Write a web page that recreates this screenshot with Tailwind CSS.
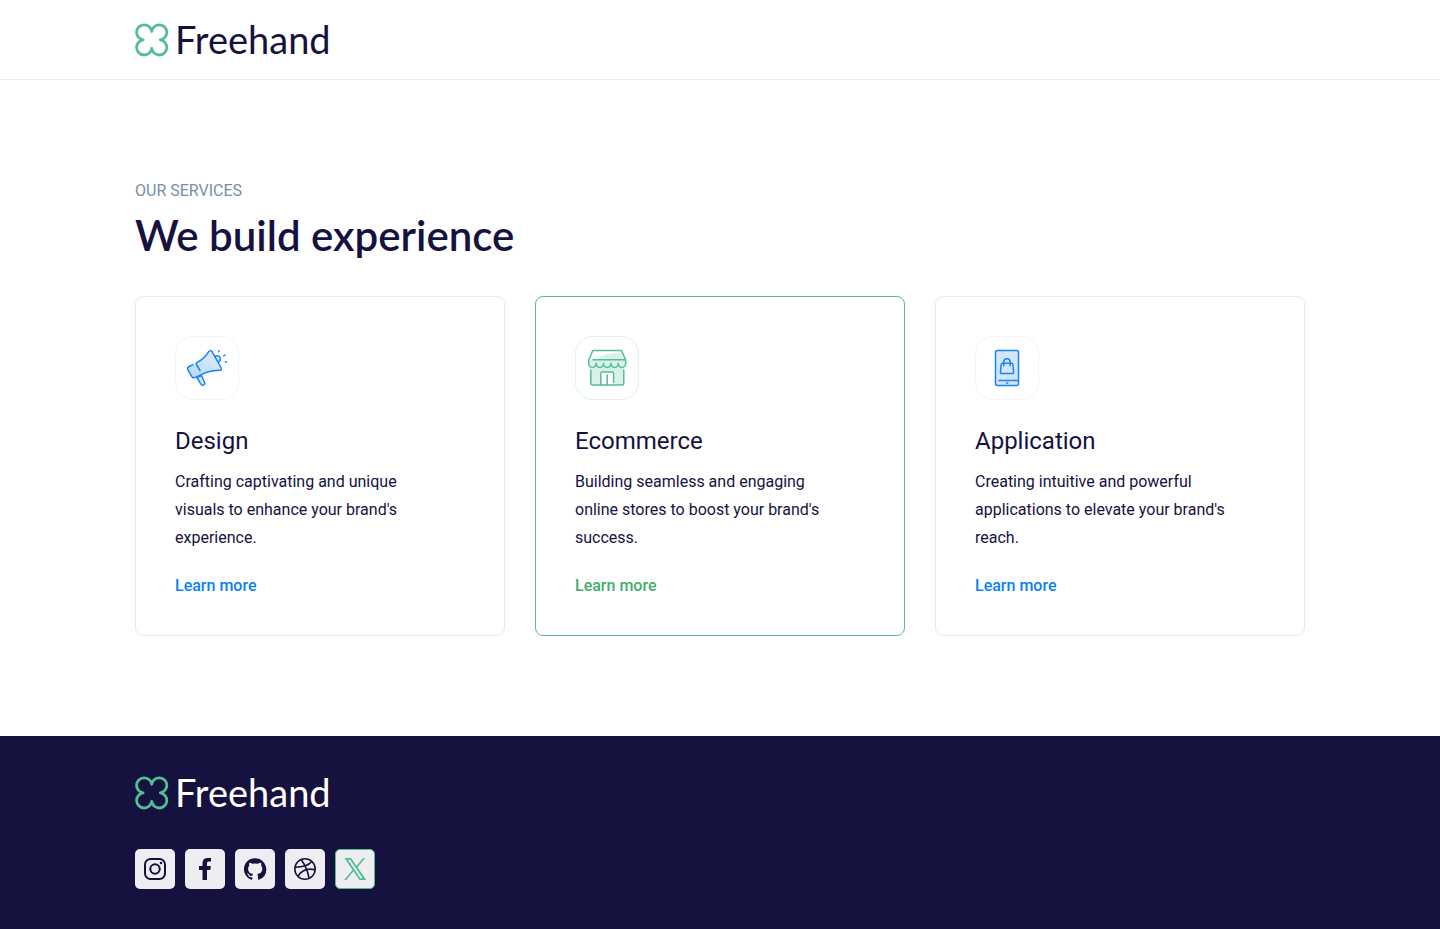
<!DOCTYPE html>
<html lang="en">
<head>
<meta charset="utf-8">
<meta name="viewport" content="width=device-width, initial-scale=1">
<title>Freehand</title>
<script src="https://cdn.jsdelivr.net/npm/@tailwindcss/browser@4"></script>
</head>
<body class="flex min-h-screen flex-col bg-white font-['Roboto',sans-serif] text-base text-[#16123f]">
<svg class="hidden" aria-hidden="true">
  <symbol id="clover" viewBox="0 0 34 34">
    <path d="M16.700 8.300A7.600 7.600 0 1 1 25.300 16.900A7.600 7.600 0 1 1 16.700 25.500A7.600 7.600 0 1 1 8.100 16.900A7.600 7.600 0 1 1 16.700 8.300Z" fill="none" stroke="#54bd95" stroke-width="2.800" stroke-linejoin="round"/>
  </symbol>
</svg>

<header class="border-b border-[#ececf1]">
  <div class="mx-auto flex h-[79px] w-full max-w-[1170px] items-center">
    <a href="#" class="flex items-center gap-1.5">
      <svg class="size-[34px]" aria-hidden="true"><use href="#clover"/></svg>
      <span class="pb-0.5 font-['Lato',sans-serif] text-[38px] leading-9">Freehand</span>
    </a>
  </div>
</header>

<main class="mx-auto w-full max-w-[1170px] grow pt-[100px] pb-24">
  <p class="leading-[22px] text-[#7390a8]">OUR SERVICES</p>
  <h1 class="mt-2 font-['Lato',sans-serif] text-[42px] leading-[50px] font-semibold">We build experience</h1>
  <div class="mt-9 grid gap-[30px] md:grid-cols-3">

    <article class="rounded-lg border border-[#e9e9f3] px-[39px] pt-[39px] pb-[35px]">
      <svg class="size-16" viewBox="0 0 64 64" fill="none" stroke="#1785f5" stroke-width="1.500" stroke-linecap="round" stroke-linejoin="round" aria-hidden="true">
        <defs><linearGradient id="horn" x1="0" y1="1" x2="1" y2="0"><stop offset="0" stop-color="#b9d8fb"/><stop offset="1" stop-color="#dfedfe"/></linearGradient></defs>
        <rect x=".5" y=".5" width="63" height="63" rx="17" fill="#fff" stroke="#edf4fd" stroke-width="1"/>
        <path d="M22 41.500L26 48.300Q27 49.800 28.600 48.800Q30.300 47.800 29.500 46.300L26.500 39.500Z" fill="#cfe4fd"/>
        <path d="M40 20.300Q44 18.600 45.200 22Q46 24.800 43.300 26" fill="#cfe4fd"/>
        <path d="M14.200 30.500L20 27.700Q29.500 22.500 33.500 15.800Q35.300 13.500 37 15.700L46.300 32Q47 34.200 44.300 34.300Q33 34.500 24 39.800L19.600 41.600Q17.700 42.300 16.600 40.300L12.800 33.600Q12 31.600 14.200 30.500Z" fill="url(#horn)" stroke="none"/>
        <path d="M21 27.200Q29.500 22.500 33.500 15.800Q35.300 13.500 37 15.700L46.300 32Q47 34.200 44.300 34.300Q33 34.500 24 39.800L19.600 41.600Q17.700 42.300 16.600 40.300L12.800 33.600Q12 31.600 14.200 30.500L18 28.600M21.500 28.500L25 34.500M43.600 15.800L44 14.800M48.700 19.800L50 19.100M50.200 25.700L51.300 26"/>
      </svg>
      <h2 class="mt-[25px] text-2xl leading-8">Design</h2>
      <p class="mt-[11px] max-w-[260px] leading-7">Crafting captivating and unique visuals to enhance your brand's experience.</p>
      <a href="#" class="mt-5 inline-block leading-7 font-medium text-[#0a80f5]">Learn more</a>
    </article>

    <article class="rounded-lg border border-[#54bd95] px-[39px] pt-[39px] pb-[35px]">
      <svg class="size-16" viewBox="0 0 64 64" fill="none" stroke="#54bd95" stroke-width="1.500" stroke-linecap="round" stroke-linejoin="round" aria-hidden="true">
        <rect x=".5" y=".5" width="63" height="63" rx="17" fill="#fff" stroke="#dff3ec" stroke-width="1"/>
        <path d="M22 23.500Q31 15.500 47 17.500L50.500 25V30H48.800V49H16V30H14V23.500Z" fill="#d9f1ec" stroke="none"/>
        <path d="M14 23.500L17.800 14.500H46.500L50.500 23.500M18 23.700H50.700V27.200A3.700 4.200 0 0 1 43.300 27.200A3.700 4.200 0 0 1 35.900 27.200A3.700 4.200 0 0 1 28.500 27.200A3.700 4.200 0 0 1 21.100 27.200A3.700 4.200 0 0 1 13.700 27.200V23.700"/>
        <path d="M26 48.500V36.500H38.500V48.500Z" fill="#fff" stroke="none"/>
        <path d="M15.800 34V47.500Q15.800 49 17.300 49H47.300Q48.800 49 48.800 47.500V34M25.800 48.500V37.500Q25.800 36 27.300 36H37Q38.600 36 38.600 37.500V46.500M32.200 39V48.500"/>
      </svg>
      <h2 class="mt-[25px] text-2xl leading-8">Ecommerce</h2>
      <p class="mt-[11px] max-w-[260px] leading-7">Building seamless and engaging online stores to boost your brand's success.</p>
      <a href="#" class="mt-5 inline-block leading-7 font-medium text-[#3fae6a]">Learn more</a>
    </article>

    <article class="rounded-lg border border-[#e9e9f3] px-[39px] pt-[39px] pb-[35px]">
      <svg class="size-16" viewBox="0 0 64 64" fill="none" stroke="#1785f5" stroke-width="1.500" stroke-linecap="round" stroke-linejoin="round" aria-hidden="true">
        <rect x=".5" y=".5" width="63" height="63" rx="17" fill="#fff" stroke="#edf4fd" stroke-width="1"/>
        <rect x="20.500" y="14.500" width="23" height="35" rx="2" fill="#d3e6fd"/>
        <path d="M24 44.500H43.300M31.500 47H32.700M27.300 27.300H36.700Q37.700 27.300 37.800 28.300L38.600 36Q38.700 37.500 37.200 37.500H26.800Q25.300 37.500 25.400 36L26.200 28.300Q26.300 27.300 27.300 27.300ZM28.800 29.800V26A3.200 3.200 0 0 1 35.200 26V29.800"/>
      </svg>
      <h2 class="mt-[25px] text-2xl leading-8">Application</h2>
      <p class="mt-[11px] max-w-[260px] leading-7">Creating intuitive and powerful applications to elevate your brand's reach.</p>
      <a href="#" class="mt-5 inline-block leading-7 font-medium text-[#0a80f5]">Learn more</a>
    </article>
  </div>
</main>

<footer class="bg-[#16123f] pt-[38px] pb-10 text-white">
  <div class="mx-auto w-full max-w-[1170px]">
    <a href="#" class="flex w-fit items-center gap-1.5">
      <svg class="size-[34px]" aria-hidden="true"><use href="#clover"/></svg>
      <span class="pb-0.5 font-['Lato',sans-serif] text-[38px] leading-9">Freehand</span>
    </a>
    <nav aria-label="Social" class="mt-[37px] flex gap-2.5 text-[#16123f]">
      <a href="#" aria-label="Instagram" class="flex size-10 items-center justify-center rounded-[5px] bg-[#eeedf2]">
        <svg class="size-6" viewBox="0 0 24 24" fill="none" stroke="currentColor" stroke-width="2" aria-hidden="true"><rect x="2" y="2" width="20" height="20" rx="5.500"/><circle cx="12" cy="12" r="4.700"/><circle cx="18" cy="6" r="1.300" fill="currentColor" stroke="none"/></svg>
      </a>
      <a href="#" aria-label="Facebook" class="flex size-10 items-center justify-center rounded-[5px] bg-[#eeedf2]">
        <svg class="size-6" viewBox="0 0 24 24" fill="currentColor" aria-hidden="true"><path d="M9.500 23V13H6V9H9.500V6.200C9.500 2.900 11.400 1 14.600 1H18V4.600H15.900C14.500 4.600 14 5.300 14 6.600V9H17.900L17.300 13H14V23Z"/></svg>
      </a>
      <a href="#" aria-label="GitHub" class="flex size-10 items-center justify-center rounded-[5px] bg-[#eeedf2]">
        <svg class="size-6" viewBox="-0.500 -0.500 25 25" fill="currentColor" aria-hidden="true"><path d="M12 .8C5.600.8.5 5.900.5 12.200c0 5.100 3.300 9.400 7.900 10.900.6.1.8-.3.800-.6v-2c-3.200.7-3.900-1.400-3.900-1.400-.5-1.300-1.300-1.700-1.300-1.700-1-.7.1-.7.1-.7 1.200.1 1.800 1.200 1.800 1.200 1 1.800 2.700 1.300 3.400 1 .1-.8.400-1.300.7-1.600-2.600-.3-5.200-1.300-5.200-5.700 0-1.300.4-2.300 1.200-3.100-.1-.3-.5-1.500.1-3.100 0 0 1-.3 3.200 1.200a11 11 0 0 1 5.800 0c2.200-1.500 3.200-1.200 3.200-1.200.6 1.600.2 2.800.1 3.100.7.800 1.200 1.800 1.200 3.100 0 4.400-2.700 5.400-5.300 5.700.4.400.8 1.100.8 2.100v3.100c0 .3.200.7.8.6a11.500 11.500 0 0 0 7.900-10.900C23.500 5.900 18.400.8 12 .8Z"/></svg>
      </a>
      <a href="#" aria-label="Dribbble" class="flex size-10 items-center justify-center rounded-[5px] bg-[#eeedf2]">
        <svg class="size-6" viewBox="0 0 24 24" fill="none" stroke="currentColor" stroke-width="1.600" aria-hidden="true"><circle cx="12" cy="12" r="10.200"/><path d="M8.200 2.700C12.500 8.200 14.800 13.800 16 21.200M2 10.200C9.500 10.200 15 9.300 18.800 4.600M5 19.300C8.500 13.200 14.500 11 22 12.700"/></svg>
      </a>
      <a href="#" aria-label="X" class="flex size-10 items-center justify-center rounded-[5px] border border-[#54bd95] bg-[#eeedf2] text-[#54bd95]">
        <svg class="size-6" viewBox="0 0 24 24" aria-hidden="true"><path fill="currentColor" fill-rule="evenodd" d="M1.500 1H8L13.500 8.900L20 1H22.200L14.500 10.200L23.200 23H16.500L10.500 14.300L3.300 23H1.100L9.500 12.900ZM5 2.800L17.300 21.200H19.700L7.100 2.800Z"/></svg>
      </a>
    </nav>
  </div>
</footer>
</body>
</html>
